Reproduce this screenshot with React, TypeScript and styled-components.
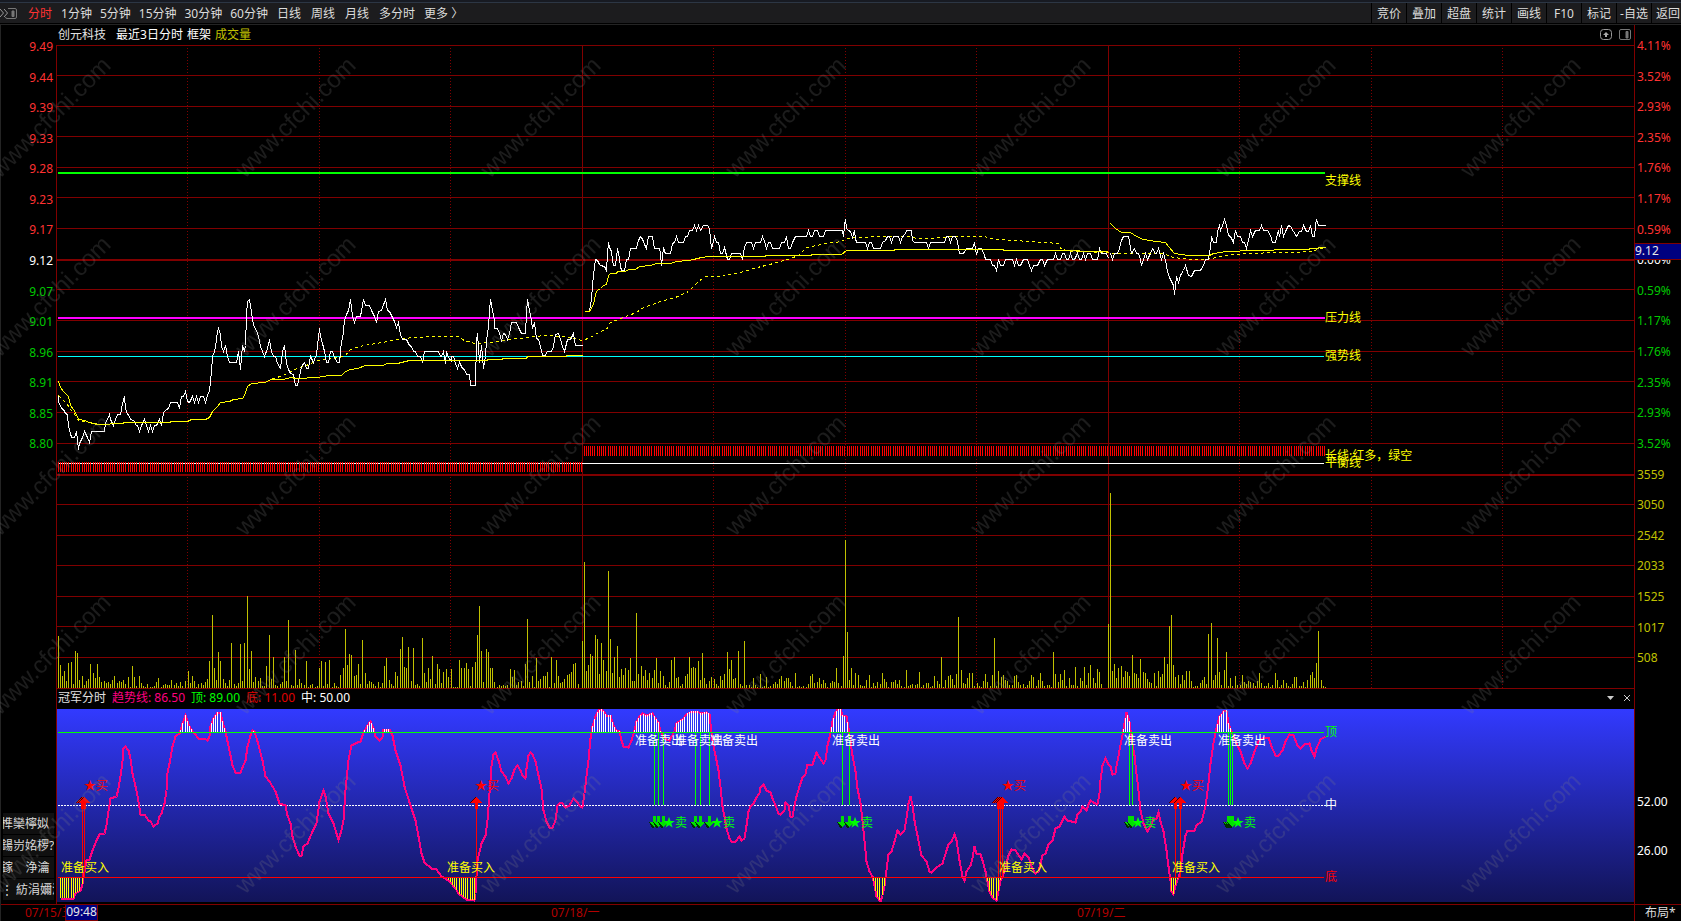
import React from 'react';
import styled, { createGlobalStyle } from 'styled-components';

type Point = [number, number];

const GRID_RED = '#800000';
const LEFT = 56;
const PLOT_W = 1579;
const MAIN_TOP = 45;
const MAIN_H = 644;
const SUB_TOP = 709;
const SUB_H = 193;
const DATA_START = 58;
const DATA_END = 1325;
const MINUTE = 263 / 120;

const GlobalStyle = createGlobalStyle`
  * { box-sizing: border-box; }
  html, body { margin: 0; background: #000; }
  body, button {
    font-family: 'Noto Sans', 'Noto Sans CJK SC', sans-serif;
    font-size: 12px;
    line-height: 16px;
  }
`;

const Page = styled.div`
  position: relative;
  display: flex;
  flex-direction: column;
  height: 100vh;
  min-height: 640px;
  overflow: hidden;
  background: #000;
  color: #fff;
`;

const TopStrip = styled.div`
  flex: none;
  height: 3px;
  background: #171a22;
  border-bottom: 1px solid #2c3644;
`;

const Toolbar = styled.nav`
  flex: none;
  display: flex;
  justify-content: space-between;
  height: 20px;
  background: #1c1c1e;
  white-space: nowrap;
  overflow: hidden;
`;

const PeriodArea = styled.div`
  display: flex;
  align-items: center;
  gap: 9px;
  padding-top: 2px;
`;

const PeriodGroup = styled.div<{ $gap: number }>`
  display: flex;
  gap: ${(p) => p.$gap}px;
`;

const PeriodButton = styled.button<{ $active?: boolean }>`
  padding: 0;
  border: 0;
  background: none;
  white-space: nowrap;
  color: ${(p) => (p.$active ? '#ff3232' : '#dcdcdc')};
`;

const ToolGroup = styled.div`
  display: flex;
  flex: none;
`;

const ToolButton = styled.button`
  width: 35px;
  padding: 2px 0 0;
  border: 0;
  border-left: 1px solid #000;
  background: #1c1c1e;
  color: #dcdcdc;
  white-space: nowrap;
  &:last-child { width: 30px; padding-left: 4px; text-align: left; }
`;

const Frame = styled.main`
  flex: 1;
  display: flex;
  flex-direction: column;
  min-height: 0;
  margin-top: 1px;
  border-top: 1px solid #242424;
  border-left: 1px solid #242424;
`;

const Row = styled.section<{ $height?: number; $grow?: number }>`
  display: grid;
  grid-template-columns: 55px minmax(0, 1fr) 46px;
  grid-template-rows: minmax(0, 1fr);
  flex: ${(p) => (p.$grow ? `${p.$grow} 1 0` : `0 0 ${p.$height}px`)};
  min-height: 0;
`;

const HeaderCell = styled.header<{ $line?: boolean }>`
  grid-column: 2;
  display: flex;
  align-items: center;
  gap: ${(p) => (p.$line ? 6 : 4)}px;
  padding: 0 3px ${(p) => (p.$line ? 2 : 0)}px 1px;
  border-right: 1px solid ${GRID_RED};
  border-left: 1px solid ${(p) => (p.$line ? GRID_RED : 'transparent')};
  white-space: nowrap;
`;

const Caption = styled.span<{ $color: string; $gap?: number }>`
  color: ${(p) => p.$color};
  margin-right: ${(p) => p.$gap ?? 0}px;
`;

const HeaderTools = styled.div`
  display: flex;
  align-items: center;
  gap: 7px;
  margin-left: auto;
`;

const IconButton = styled.button`
  display: flex;
  padding: 0;
  border: 0;
  background: none;
`;

const PlotCell = styled.div`
  position: relative;
  grid-column: 2;
  min-height: 0;
`;

const Drawing = styled.svg`
  display: block;
  width: 100%;
  height: 100%;
`;

const Label = styled.span<{ $color: string }>`
  position: absolute;
  margin-top: -8px;
  white-space: nowrap;
  color: ${(p) => p.$color};
`;

const Axis = styled.div<{ $side: 'left' | 'right' }>`
  position: relative;
  display: flex;
  flex-direction: column;
  justify-content: space-between;
  min-height: 0;
  padding: ${(p) => (p.$side === 'left' ? '1px 3px 0 0' : '0 0 0 2px')};
  text-align: ${(p) => (p.$side === 'left' ? 'right' : 'left')};
`;

const AxisText = styled.span<{ $color: string }>`
  height: 1px;
  line-height: 1px;
  color: ${(p) => p.$color};
`;

const PriceTag = styled.output`
  position: absolute;
  left: 0;
  right: 0;
  top: 30.7%;
  height: 17px;
  line-height: 13px;
  border: solid ${GRID_RED};
  border-width: 1px 0;
  background: #000080;
  color: #e8e8e8;
`;

const SideButtons = styled.div`
  display: flex;
  flex-direction: column;
  justify-content: flex-end;
  gap: 1px;
  padding: 0 2px 2px;
`;

const SideButton = styled.button`
  height: 21px;
  padding: 0;
  border: 0;
  overflow: hidden;
  white-space: pre;
  text-align: left;
  text-indent: -2px;
  background: #101010;
  color: #dcdcdc;
`;

const SubAxis = styled.div`
  display: flex;
  flex-direction: column;
  justify-content: center;
  gap: 33px;
  padding: 42px 0 0 2px;
`;

const Spacer = styled.div`
  display: flex;
  flex: 0 0 2px;
  border: solid ${GRID_RED};
  border-width: 0 1px;
  margin: 0 46px 0 55px;
`;

const DateBar = styled.footer`
  position: relative;
  flex: 0 0 17px;
  display: flex;
  border-top: 1px solid ${GRID_RED};
`;

const Dates = styled.div`
  flex: 1;
  display: flex;
  margin: 0 31px 0 24px;
  color: #b40000;
`;

const DateText = styled.span`
  flex: 1;
`;

const TimeTag = styled.output`
  position: absolute;
  left: 64px;
  top: -1px;
  height: 17px;
  width: 33px;
  text-align: center;
  line-height: 14px;
  border: 1px solid ${GRID_RED};
  background: #000080;
  color: #e8e8e8;
`;

const LayoutButton = styled.button`
  width: 47px;
  padding: 0 0 0 10px;
  border: 0;
  border-left: 1px solid ${GRID_RED};
  background: none;
  color: #dcdcdc;
  text-align: left;
`;

const Watermark = styled.svg`
  position: absolute;
  inset: 0;
  width: 100%;
  height: 100%;
  pointer-events: none;
`;

/* Series are stored compactly as "x,y" pairs in thirds of a pixel or finer. */
const trace = (ox: number, oy: number, scale: number, src: string): Point[] =>
  src
    .trim()
    .split(/\s+/)
    .map((pair) => {
      const [x, y] = pair.split(',').map(Number);
      return [Math.floor(ox + x / scale), Math.floor(oy + y / 3)];
    });

const path = (points: Point[]) => points.map(([x, y]) => `${x + 0.5},${y + 0.5}`).join(' ');

const S1 = 2.6133;

const price: Point[][] = [
  trace(0, 240, S1, `152,466 153,485 160,505 166,507 170,520 177,523 180,560 184,580 187,592 194,592 200,574 205,627 208,610 215,592 221,574 228,592 234,607 238,574 272,574 276,548 280,537 285,523 289,537 296,557 302,537 307,523 315,523 320,490 325,468 328,505 332,523 337,523 342,537 350,541 357,557 360,557 365,574 370,557 377,537 383,557 388,574 393,557 398,574 404,557 410,555 416,537 422,557 428,518 434,507 440,505 446,487 464,487 469,505 475,470 480,468 485,454 490,485 496,487 502,468 508,487 513,468 519,487 525,468 532,468 537,487 543,465 548,450 552,395 556,350 560,333 564,318 568,275 571,264 576,282 580,318 584,333 589,316 594,350 599,367 618,367 624,333 628,387 633,316 638,335 641,315 644,225 648,185 652,178 656,215 660,240 665,262 670,272 675,290 681,318 686,333 692,350 698,325 704,298 709,335 714,350 720,350 726,370 733,386 738,335 743,316 748,370 754,387 760,400 767,404 773,437 778,437 783,410 789,380 795,366 801,385 806,385 812,350 818,366 824,350 828,345 831,315 835,265 838,290 843,310 848,335 853,367 858,367 864,333 870,335 875,352 881,366 887,367 892,300 896,297 901,240 905,222 910,210 915,178 920,228 926,247 932,230 943,230 950,178 956,195 965,195 972,210 979,228 985,247 990,215 998,210 1007,178 1012,210 1018,213 1025,232 1030,245 1035,262 1041,247 1046,282 1051,297 1063,297 1070,315 1075,318 1080,333 1087,335 1092,350 1098,350 1104,367 1110,333 1145,333 1152,350 1155,350 1160,333 1165,370 1168,333 1173,352 1179,365 1180,350 1185,350 1190,370 1196,385 1202,367 1208,385 1214,387 1219,403 1226,403 1230,437 1242,437 1246,300 1248,280 1252,367 1258,315 1263,385 1268,350 1272,300 1276,260 1279,215 1282,178 1286,210 1291,240 1292,265 1300,265 1305,280 1311,300 1317,280 1322,282 1327,298 1331,280 1338,248 1350,248 1354,262 1362,280 1373,280 1376,220 1379,178 1383,210 1388,240 1392,265 1396,248 1402,295 1408,298 1413,318 1418,345 1424,350 1430,333 1440,333 1446,318 1452,282 1459,280 1464,298 1470,318 1476,333 1482,298 1492,298 1498,280 1504,315 1521,316`),
  [
    ...trace(560, 160, 3, `72,454 88,454 93,415 97,375 101,345 103,320 107,298 112,300 117,313 122,316 133,318 139,331 142,280 145,247 149,262 153,275 157,300 160,316 166,316 172,265 177,295 181,318 184,331 193,331 199,299 205,297 211,265 228,265 234,240 240,229 244,231 249,245 254,253 259,265 265,229 278,229 283,265 298,265 301,280 305,317 309,262 313,275 317,281 331,281 337,250 342,247 349,229 355,247 370,247 376,229 383,229 388,212 397,212 403,196 409,212 415,196 421,212 430,196 442,196 447,206 450,235 454,265 459,245 463,229 469,247 474,247 478,262 481,281 486,280 492,263 499,285 503,299 509,298 514,281 542,281 548,299 553,262 558,247 574,247 580,265 586,247 601,247 607,230 612,245 619,265 625,247 631,247 637,265 657,265 664,247 673,247 679,230 685,265 690,265 696,247 705,230 739,230 746,211 751,229 757,229 762,211 772,211 778,229 789,229 796,211 846,211 851,229 854,195 856,178 860,205 865,211 872,213 877,231 883,211 887,235 890,247 915,247 922,265 928,247 934,247 941,265 962,265 968,247 976,240 981,230 987,230 994,247 1000,230 1014,230 1021,247 1027,230 1033,226 1039,212 1054,212 1058,240 1062,247 1099,247 1105,265 1111,247 1140,247`),
    ...trace(940, 160, 3, `12,247 18,230 24,230 30,247 37,228 46,228 51,245 57,280 70,280 78,265 98,265 103,247 110,282 116,265 123,265 132,285 136,298 151,298 157,316 163,317 169,331 176,298 182,316 190,316 197,298 217,298 223,316 229,298 236,316 242,316 249,298 262,298 268,316 275,331 281,316 293,316 302,298 308,298 314,316 321,298 339,298 346,280 353,298 361,298 367,280 374,280 380,298 386,298 392,280 398,298 404,298 411,280 417,298 425,298 430,280 437,298 443,280 450,280 457,298 472,298 479,265 484,280 499,280 505,296`),
  ],
  trace(940, 160, 3, `511,280 517,298 523,280 533,279 539,265 545,240 551,229 566,229 570,262 575,280 583,265 588,280 595,280 601,298 604,316 610,298 616,280 622,298 630,280 637,265 645,280 650,280 656,265 663,297 670,280 677,300 683,335 689,352 695,365 700,375 703,402 708,350 714,367 722,345 730,330 737,316 744,345 753,350 762,331 782,331 790,315 796,298 806,297 810,262 815,230 820,247 828,247 833,215 837,196 842,212 848,196 854,178 860,196 866,225 872,230 880,247 886,212 893,230 902,230 908,247 914,247 919,265 925,240 931,212 938,230 945,212 959,212 965,196 971,212 983,212 990,225 998,247 1006,247 1014,212 1018,230 1024,196 1030,230 1036,213 1046,196 1052,198 1060,213 1070,230 1077,213 1085,213 1091,197 1098,213 1105,213 1111,197 1117,230 1123,230 1127,197 1130,178 1135,196 1155,196`),
];

const average: Point[][] = [
  trace(0, 240, S1, `152,424 157,442 165,453 178,470 184,495 192,508 200,522 206,538 220,542 235,547 255,552 320,550 325,547 440,547 450,544 490,543 500,539 537,537 548,532 556,514 568,500 576,488 600,485 610,479 633,475 640,465 648,440 658,430 690,427 710,418 740,418 758,412 775,416 830,411 860,406 893,406 903,395 915,389 935,385 955,376 1003,376 1010,371 1040,369 1070,361 1270,361 1280,358 1310,358 1315,355 1375,355 1378,349 1480,349 1480,346 1522,346`),
  [
    ...trace(560, 160, 3, `72,454 89,454 96,438 103,420 107,400 113,390 122,384 130,375 138,373 145,345 152,341 168,341 172,335 197,335 205,329 227,327 237,319 270,315 290,311 330,309 350,305 385,302 400,298 425,293 447,290 612,290 618,286 750,286 756,283 845,283 858,271 1000,271 1006,268 1140,268`),
    ...trace(940, 160, 3, `188,268 192,271 415,271 420,274 503,274`),
  ],
  trace(940, 160, 3, `511,190 525,206 545,216 572,217 588,228 610,239 650,243 676,246 686,258 702,279 725,284 745,287 808,287 820,281 840,276 858,274 897,274 900,271 1000,271 1004,268 1105,268 1110,265 1132,264 1137,262 1155,262`),
];

const slowAverage: Point[] = [
  ...trace(0, 240, S1, `152,466 165,480 175,490 188,512 198,525 206,540 235,546 260,553 320,550 325,547 440,547 450,544 490,543 500,539 537,537 548,532 556,514 568,500 576,488 600,485 610,479 633,475 640,465 648,440 658,430 690,427 715,415 740,405 770,388 800,376 830,362 870,355 900,348 915,328 950,315 1000,308 1050,296 1090,293 1130,289 1195,290 1215,302 1240,309 1290,306 1330,299 1380,291 1420,286 1470,290 1500,294 1522,300`),
  ...trace(560, 160, 3, `67,541 90,533 120,513 140,507 150,488 180,475 230,458 245,444 300,424 345,412 385,395 415,363 435,350 470,349 540,336 580,324 640,310 690,296 715,285 740,262 800,250 845,243 858,234 900,232 960,230 1055,230 1070,235 1110,235 1140,232`),
  ...trace(940, 160, 3, `50,229 130,230 170,238 270,243 355,250 363,268 400,275 505,278 511,280 670,281 700,293 750,298 800,298 830,291 880,283 1000,278 1050,276 1110,273 1155,263`),
];

/* Volume bars, one per minute, in runs that begin at a grid column. */
const volume: { start: number; bars: string }[] = [
  { start: 58, bars: '52 23 12 17 7 25 26 4 37 35 8 12 3 7 9 24 15 10 24 11 6 7 5 6 4 8 12 5 7 6 8 4 11 1 22 11 2 12 5 2 1 4 1 1 2 6 10 1 3 4 3 3 8 3 5 2 6 2 7' },
  { start: 188, bars: '17 5 12 7 1 4 5 3 6 9 27 73 20 8 36 27 9 5 2 8 45 4 2 5 44 7 45 92 19 37 6 11 7 10 2 2 22 53 9 31 3 2 4 6 31 7 68 3 2 38 3 9 5 3 27 1 3 4 1 2' },
  { start: 319, bars: '20 27 2 26 4 28 1 5 2 1 13 20 59 23 34 33 12 13 24 4 48 15 4 7 6 4 2 6 1 5 22 30 8 4 2 16 12 39 51 21 20 41 7 40 3 4 2 50 15 6 20 9 32 4 24 19 5 16 19 11' },
  { start: 451, bars: '19 1 1 1 28 20 20 25 19 2 21 26 53 82 37 6 39 36 20 20 6 1 3 2 3 2 3 19 11 18 3 6 7 2 24 69 6 12 1 30 7 9 12 12 16 1 31 5 28 12 5 6 9 13 14 16 24 25 4' },
  { start: 582, bars: '47 126 17 23 34 32 53 49 14 45 28 17 117 49 15 31 42 11 19 13 20 18 30 7 7 75 14 22 12 18 8 15 10 18 30 5 17 12 3 1 6 28 31 10 11 2 4 12 14 31 20 21 20 27 8 35 10 4 7 11' },
  { start: 714, bars: '9 4 2 12 8 14 36 19 28 9 10 37 4 2 47 3 3 1 10 3 1 14 1 2 11 1 2 4 6 4 9 12 7 10 10 6 2 15 1 2 1 2 1 4 12 14 5 6 10 4 8 5 1 5 7 6 20 5 2 32' },
  { start: 845, bars: '148 56 8 20 3 15 13 3 2 2 8 13 1 5 2 6 4 15 9 6 1 6 6 8 4 8 2 1 18 2 3 4 3 4 16 1 3 5 5 1 2 12 7 4 31 1 8 12 13 9 3 14 71 18 5 4 10 15 15 2' },
  { start: 977, bars: '5 2 1 7 14 6 2 13 50 2 17 11 13 8 7 3 3 12 13 6 3 4 1 3 7 13 11 2 8 15 7 2 3 3 1 36 14 6 14 8 18 2 10 3 3 21 2 10 7 21 3 15 23 10 5 19 16 4' },
  { start: 1108, bars: '64 195 17 24 10 20 22 11 17 16 12 33 15 14 10 29 16 15 9 6 5 15 2 17 11 14 31 24 62 73 23 11 13 4 13 8 17 17 7 1 2 2 5 8 11 4 54 65 8 13 50 16 3 18 36 2 10 2 12 3' },
  { start: 1240, bars: '3 13 6 4 7 6 5 2 7 15 5 2 2 5 1 3 15 8 1 3 8 5 2 1 4 11 11 2 2 6 1 8 13 16 10 25 57 8 2 1' },
];

const trend: Point[] = [
  ...trace(0, 680, 2.8, `168,654 205,654 210,640 225,630 230,612 235,592 240,560 241,540 250,537 260,510 270,480 278,463 292,460 298,435 303,395 308,355 325,350 332,325 338,290 342,245 346,205 352,198 360,210 365,235 372,280 378,320 385,345 392,402 405,402 415,420 422,425 430,440 440,430 447,410 453,400 460,370 465,330 470,280 476,235 483,200 490,170 502,160 510,130 518,105 526,125 532,145 545,160 555,175 572,176 580,182 586,168 590,140 597,115 610,97 617,98 622,125 630,155 636,185 645,225 652,255 658,277 672,277 680,262 687,240 693,200 700,165 706,150 712,155 720,185 735,240 742,290 755,305 770,335 782,370 798,375 805,405 812,430 820,470 828,500 838,525 845,525 850,500 862,490 875,455 885,430 895,365 905,330 912,350 920,400 935,430 942,460 948,477 955,450 962,420 968,330 975,240 983,195 1000,188 1010,185 1018,158 1028,135 1036,123 1046,145 1050,170 1062,182 1070,172 1074,147 1090,147 1098,165 1108,210 1120,255 1132,320 1150,375 1162,420 1172,470 1180,520 1188,547 1208,565 1222,567 1235,588 1255,600 1275,625 1285,640 1305,657 1329,660 1331,640 1333,590 1338,540 1348,490 1358,465 1364,420 1370,340 1376,260 1382,222 1388,217 1396,240 1405,275 1415,290 1423,310 1432,295 1440,268 1448,257 1456,270 1464,285 1470,295 1475,265 1480,225 1485,217 1492,222 1498,245 1508,285 1516,325 1522,390 1530,425 1538,443 1548,443 1554,420 1562,375`),
  ...trace(540, 680, 3, `60,367 65,368 75,381 88,375 100,355 108,365 120,378 128,381 133,340 138,290 145,240 152,175 158,140 165,110 174,92 185,89 192,97 200,107 212,107 220,135 228,152 237,155 243,180 250,200 264,202 275,180 282,150 290,125 298,108 308,101 320,107 328,103 338,99 346,115 355,128 362,155 370,170 378,178 388,180 395,170 403,155 410,130 420,120 430,115 440,102 455,95 470,94 485,99 498,96 508,102 512,130 518,180 526,225 534,270 541,320 548,378 554,410 560,445 567,475 573,484 587,483 597,470 605,480 612,475 620,435 626,395 632,378 640,370 650,352 658,340 662,322 669,314 678,330 691,337 698,355 705,375 715,400 722,404 732,390 737,368 744,375 752,408 758,408 764,380 770,350 777,318 788,292 796,283 802,252 818,252 824,235 830,217 838,232 850,250 856,240 862,195 870,160 876,125 886,97 895,86 901,86 907,105 918,110 924,145 930,185 936,225 945,275 953,325 960,370 966,420 973,480 979,545 988,575 998,590 1003,615 1010,650 1020,665 1026,645 1034,620 1040,570 1045,522 1055,515 1062,485 1072,450 1080,462 1094,450 1100,415 1106,370 1111,350 1116,375 1124,420 1132,465 1145,525 1160,545 1167,575 1174,578 1190,562 1208,550 1218,510 1225,492 1235,485 1242,462 1250,480 1258,540 1266,590 1272,600 1280,575 1290,555 1298,535 1303,500 1310,520`),
  ...trace(950, 680, 3, `90,523 98,540 105,575 112,605 118,635 128,652 138,661 145,635 150,600 158,590 166,562 175,525 184,507 195,512 203,520 213,538 224,520 235,532 246,565 256,580 265,575 272,550 276,525 286,520 295,492 308,480 316,445 328,440 342,408 352,420 365,423 375,427 383,402 390,395 396,378 408,392 415,372 421,360 430,368 443,373 447,340 450,300 458,255 465,235 474,252 482,258 488,282 495,280 500,260 508,210 516,165 522,130 530,97 538,125 545,175 552,225 560,280 566,330 572,390 580,430 592,453 600,440 610,415 618,415 625,398 632,425 640,455 648,510 655,560 660,600 665,635 670,642 676,615 690,575 696,520 705,465 712,450 732,452 740,437 755,425 765,380 775,310 782,250 790,190 800,145 808,110 822,90 830,90 836,130 845,155 858,190 872,215 882,250 892,265 900,250 912,215 925,185 940,172 954,172 965,200 975,225 985,225 998,210 1006,185 1018,163 1030,165 1042,195 1052,205 1062,192 1078,190 1085,210 1093,228 1100,205 1112,178 1127,170`),
];

const valueAt = (points: Point[], x: number): number | null => {
  for (let i = 1; i < points.length; i += 1) {
    const [x0, y0] = points[i - 1];
    const [x1, y1] = points[i];
    if (x >= x0 && x <= x1) return x1 === x0 ? y1 : y0 + ((y1 - y0) * (x - x0)) / (x1 - x0);
  }
  return null;
};

const minuteX = (i: number) => DATA_START + Math.floor(i * MINUTE);
const minutes = Array.from({ length: 579 }, (_, i) => minuteX(i)).filter((x) => x < DATA_END);

const gridRows = [45, 75, 106, 136, 167, 197, 228, 259, 289, 320, 351, 381, 412, 443, 474, 504, 535, 565, 596, 626, 657, 688];
const boldRows = [259, 474];
const dottedCols = [187, 319, 450, 713, 845, 976, 1239, 1371, 1502];
const solidCols = [56, 582, 1108, 1634];

const bar = (x: number, y: number, h: number, w = 1) => `M${x} ${y}h${w}v${h}h${-w}z`;

const TOP_Y = 732;
const MID_Y = 805;
const BOTTOM_Y = 877;

const overBars = minutes
  .map((x) => ({ x, y: Math.round(valueAt(trend, x) ?? MID_Y) }))
  .filter((b) => b.y < TOP_Y)
  .map((b) => bar(b.x, b.y, TOP_Y - b.y))
  .join('');
const underBars = minutes
  .map((x) => ({ x, y: Math.round(valueAt(trend, x) ?? MID_Y) }))
  .filter((b) => b.y > BOTTOM_Y)
  .map((b) => bar(b.x, BOTTOM_Y, b.y - BOTTOM_Y))
  .join('');

const buyLines = [82, 84, 476, 998, 1000, 1002, 1175, 1180];
const sellLines = [654, 658, 663, 695, 700, 709, 842, 849, 1129, 1132, 1228, 1230, 1232];

interface Mark { text: string; x: number; y: number; color: string }

const mainMarks: Mark[] = [
  { text: '支撑线', x: 1325, y: 181, color: '#ffff00' },
  { text: '压力线', x: 1325, y: 318, color: '#ffff00' },
  { text: '强势线', x: 1325, y: 356, color: '#ffff00' },
  { text: '长线:红多，绿空', x: 1325, y: 456, color: '#ffff00' },
  { text: '平衡线', x: 1325, y: 463, color: '#ffff00' },
];

const subMarks: Mark[] = [
  ...[84, 475, 1002, 1180].map((x) => ({ text: '★买', x, y: 786, color: '#ff0000' })),
  ...[61, 447, 999, 1172].map((x) => ({ text: '准备买入', x, y: 868, color: '#ffff00' })),
  ...[635, 675, 710, 832, 1124, 1218].map((x) => ({ text: '准备卖出', x, y: 741, color: '#ffffff' })),
  ...[663, 711, 849, 1132, 1232].map((x) => ({ text: '★卖', x, y: 823, color: '#00ff00' })),
  { text: '顶', x: 1325, y: 732, color: '#00ff00' },
  { text: '中', x: 1325, y: 805, color: '#ffffff' },
  { text: '底', x: 1325, y: 877, color: '#ff0000' },
];

const Marks = ({ items, top, height }: { items: Mark[]; top: number; height: number }) => (
  <>
    {items.map((m) => (
      <Label
        key={`${m.text}-${m.x}`}
        $color={m.color}
        style={{ left: `${((m.x - LEFT) / PLOT_W) * 100}%`, top: `${((m.y - top) / height) * 100}%` }}
      >
        {m.text}
      </Label>
    ))}
  </>
);

const MainPlot = () => (
  <Drawing viewBox={`${LEFT} ${MAIN_TOP} ${PLOT_W} ${MAIN_H}`} preserveAspectRatio="none" shapeRendering="crispEdges">
    <path fill={GRID_RED} d={gridRows.map((y) => bar(56, y, boldRows.includes(y) ? 2 : 1, 1578)).join('')} />
    <path fill={GRID_RED} d={solidCols.map((x) => bar(x, 45, 644)).join('')} />
    {dottedCols.map((x) => (
      <line key={x} x1={x + 0.5} x2={x + 0.5} y1={48} y2={688} stroke={GRID_RED} strokeDasharray="1 2" />
    ))}
    <path fill="#00ff00" d={bar(58, 172, 2, 1267)} />
    <path fill="#ff00ff" d={bar(58, 317, 2, 1267)} />
    <path fill="#00ffff" d={bar(58, 356, 1, 1266)} />
    <path fill="#ffffff" d={bar(58, 463, 1, 1266)} />
    <path fill="#ff0000" d={minutes.map((x) => (x < 583 ? bar(x, 462, 10) : bar(x, 446, 10))).join('')} />
    <path
      fill="#c0c000"
      d={volume
        .map(({ start, bars }) =>
          bars.split(' ').map((h, i) => bar(start + Math.floor(i * MINUTE), 688 - Number(h), Number(h))).join(''))
        .join('')}
    />
    <g fill="none" stroke="#ffff00">
      <polyline points={path(slowAverage)} strokeDasharray="3 3" />
      {price.map((line, i) => (
        <polyline key={i} points={path(line)} stroke="#ffffff" />
      ))}
      {average.map((line, i) => (
        <polyline key={i} points={path(line)} />
      ))}
    </g>
  </Drawing>
);

const SubPlot = () => (
  <Drawing viewBox={`${LEFT} ${SUB_TOP} ${PLOT_W} ${SUB_H}`} preserveAspectRatio="none" shapeRendering="crispEdges">
    <defs>
      <linearGradient id="depth" x1="0" x2="0" y1="0" y2="1">
        <stop offset="0" stopColor="#323aff" />
        <stop offset="1" stopColor="#121458" />
      </linearGradient>
    </defs>
    <rect x={57} y={709} width={1577} height={193} fill="url(#depth)" />
    <path fill={GRID_RED} d={bar(56, 709, 193) + bar(1634, 709, 193)} />
    <line x1={58} x2={1326} y1={805.5} y2={805.5} stroke="#fff" strokeDasharray="2 1" />
    <polyline points={path(trend)} fill="none" stroke="#ff0080" strokeWidth={2} />
    <path fill="#fff" d={overBars} />
    <path fill="#ffff00" d={underBars} />
    <path fill="#00ff00" d={bar(58, TOP_Y, 1, 1266)} />
    <path fill="#ff0000" d={bar(58, BOTTOM_Y, 1, 1266)} />
    <path fill="#ff0000" d={buyLines.map((x) => bar(x, 806, 71)).join('')} />
    <path fill="#00ff00" d={sellLines.map((x) => bar(x, 733, 72)).join('')} />
    {buyLines.map((x) => (
      <g key={x}>
        <path fill="#400000" d={`M${x - 1} 797h2l5 6h-12z`} />
        <path fill="#ff0000" d={`M${x} 797h1l5 6h-4v6h-3v-6h-4z`} />
      </g>
    ))}
    {sellLines.map((x) => (
      <g key={x}>
        <path fill="#003000" d={`M${x - 5} 822h10l-5 6h-2z`} />
        <path fill="#00e000" d={`M${x - 1} 816h3v6h3l-4 5h-1l-4 -5h3z`} />
      </g>
    ))}
  </Drawing>
);

const leftPrices = ['9.49', '9.44', '9.39', '9.33', '9.28', '9.23', '9.17', '9.12', '9.07', '9.01', '8.96', '8.91', '8.85', '8.80'];
const rightScale = ['4.11%', '3.52%', '2.93%', '2.35%', '1.76%', '1.17%', '0.59%', '0.00%', '0.59%', '1.17%', '1.76%', '2.35%', '2.93%', '3.52%', '3559', '3050', '2542', '2033', '1525', '1017', '508', ''];

const scaleColor = (i: number) => {
  if (i > 13) return '#c0c000';
  if (i === 7) return '#ffffff';
  return i < 7 ? '#ff3232' : '#00c800';
};

const PanelIcon = () => (
  <svg width="12" height="12" viewBox="0 0 12 12" fill="none" stroke="#777">
    <rect x=".5" y=".5" width="11" height="10" rx="1.5" />
    <path d="M7 2.5h2v6.5h-2z" fill="#777" />
  </svg>
);

export default function App() {
  return (
    <Page>
      <GlobalStyle />
      <TopStrip />
      <Toolbar aria-label="周期">
        <PeriodArea>
          <IconButton aria-label="展开侧栏">
            <svg width="19" height="14" viewBox="0 0 19 14" fill="none" stroke="#777">
              <path d="M0 2l3.500 4l-3.500 4M4 2l3.500 4l-3.500 4" stroke="#999" />
              <path d="M8 1.500h7a1.500 1.500 0 0 1 1.500 1.500v7a1.500 1.500 0 0 1-1.500 1.500h-8a1.500 1.500 0 0 1-1.500-1.500" />
              <path d="M12 4h2v5.500h-2z" fill="#777" />
            </svg>
          </IconButton>
          <PeriodButton $active>分时</PeriodButton>
          <PeriodGroup $gap={8}>
            {['1分钟', '5分钟', '15分钟', '30分钟', '60分钟'].map((t) => (
              <PeriodButton key={t}>{t}</PeriodButton>
            ))}
          </PeriodGroup>
          <PeriodGroup $gap={10}>
            {['日线', '周线', '月线', '多分时'].map((t) => (
              <PeriodButton key={t}>{t}</PeriodButton>
            ))}
          </PeriodGroup>
          <PeriodButton>更多 〉</PeriodButton>
        </PeriodArea>
        <ToolGroup>
          {['竞价', '叠加', '超盘', '统计', '画线', 'F10', '标记', '-自选', '返回'].map((t) => (
            <ToolButton key={t}>{t}</ToolButton>
          ))}
        </ToolGroup>
      </Toolbar>

      <Frame>
        <Row $height={20}>
          <HeaderCell>
            <Caption $color="#e0e0e0" $gap={6}>创元科技</Caption>
            <Caption $color="#ffffff">最近3日分时</Caption>
            <Caption $color="#ffffff">框架</Caption>
            <Caption $color="#c0c000">成交量</Caption>
            <HeaderTools>
              <IconButton aria-label="添加">
                <svg width="12" height="12" viewBox="0 0 12 12" fill="none" stroke="#999">
                  <rect x=".5" y=".5" width="11" height="10" rx="3" />
                  <path d="M6 3l3 3h-2v2h-2v-2h-2z" fill="#aaa" stroke="none" />
                </svg>
              </IconButton>
              <IconButton aria-label="侧栏">
                <PanelIcon />
              </IconButton>
            </HeaderTools>
          </HeaderCell>
        </Row>

        <Row $grow={MAIN_H}>
          <Axis $side="left">
            {rightScale.map((_, i) => (
              <AxisText key={i} $color={scaleColor(i)}>{leftPrices[i] ?? ''}</AxisText>
            ))}
          </Axis>
          <PlotCell>
            <MainPlot />
            <Marks items={mainMarks} top={MAIN_TOP} height={MAIN_H} />
          </PlotCell>
          <Axis $side="right">
            {rightScale.map((t, i) => (
              <AxisText key={i} $color={scaleColor(i)}>{t}</AxisText>
            ))}
            <PriceTag>9.12</PriceTag>
          </Axis>
        </Row>

        <Row $height={20}>
          <HeaderCell $line>
            <Caption $color="#e0e0e0">冠军分时</Caption>
            <Caption $color="#ff0080">趋势线: 86.50</Caption>
            <Caption $color="#00ff00">顶: 89.00</Caption>
            <Caption $color="#e00000">底: 11.00</Caption>
            <Caption $color="#ffffff">中: 50.00</Caption>
            <HeaderTools>
              <IconButton aria-label="指标菜单">
                <svg width="9" height="6" viewBox="0 0 9 6"><path d="M1 1h7l-3.500 4z" fill="#ccc" /></svg>
              </IconButton>
              <IconButton aria-label="关闭">
                <svg width="9" height="8" viewBox="0 0 9 8"><path d="M2 1l6 6M8 1l-6 6" stroke="#ccc" /></svg>
              </IconButton>
            </HeaderTools>
          </HeaderCell>
        </Row>

        <Row $grow={SUB_H}>
          <SideButtons>
            {['榫欒檸姒', '鍚岃姳椤?(', '鎵    浄瀹', '⋮ 紡涓嬭浇'].map((t) => (
              <SideButton key={t}>{t}</SideButton>
            ))}
          </SideButtons>
          <PlotCell>
            <SubPlot />
            <Marks items={subMarks} top={SUB_TOP} height={SUB_H} />
          </PlotCell>
          <SubAxis>
            <span>52.00</span>
            <span>26.00</span>
          </SubAxis>
        </Row>
        <Spacer />

        <DateBar>
          <Dates>
            <DateText>07/15/五</DateText>
            <DateText>07/18/一</DateText>
            <DateText>07/19/二</DateText>
          </Dates>
          <LayoutButton>布局*</LayoutButton>
          <TimeTag>09:48</TimeTag>
        </DateBar>
      </Frame>

      <Watermark aria-hidden="true">
        <defs>
          <pattern id="mark" x="-12" y="43" width="245" height="179" patternUnits="userSpaceOnUse">
            <text
              transform="translate(12 136) rotate(-45)"
              fontFamily="Liberation Sans, sans-serif"
              fontSize="24"
              fill="#808080"
              fillOpacity=".22"
            >
              www.cfchi.com
            </text>
          </pattern>
        </defs>
        <rect width="100%" height="100%" fill="url(#mark)" />
      </Watermark>
    </Page>
  );
}
